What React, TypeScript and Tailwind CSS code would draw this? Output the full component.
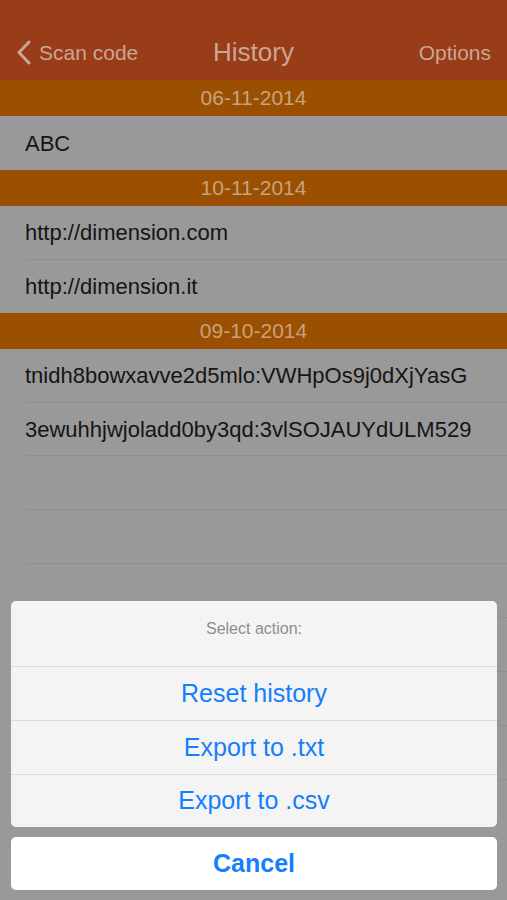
import React from "react";

const font = { fontFamily: '"Liberation Sans", Arial, sans-serif' };

function Header({ text }: { text: string }) {
  return (
    <div className="h-[36px] bg-[#9a5000] flex items-center justify-center text-[21px] text-[#c9a27e]">
      {text}
    </div>
  );
}

function Row({ text, sep = true, h = "h-[54px]" }: { text?: string; sep?: boolean; h?: string }) {
  return (
    <div className={`${h} flex flex-col pl-[25px]`}>
      <div className="flex-1 flex items-center text-[22px] text-[#151515]">{text}</div>
      {sep ? <div className="h-px bg-[#8e8e8e]" /> : null}
    </div>
  );
}

export default function App() {
  return (
    <div className="relative w-[507px] h-[900px] overflow-hidden bg-[#999999]" style={font}>
      <div className="h-[80px] bg-[#993c18] pt-[25px] flex items-center pl-[16px] pr-[16px] text-[#c9a696]">
        <div className="flex-1 flex items-center gap-[8px]">
          <svg width="15" height="25" viewBox="0 0 15 25">
            <path d="M13 2 L3 12.5 L13 23" fill="none" stroke="#c9a696" strokeWidth="3" strokeLinecap="round" strokeLinejoin="round" />
          </svg>
          <span className="text-[21px]">Scan code</span>
        </div>
        <div className="text-[26px] font-light">History</div>
        <div className="flex-1 flex justify-end text-[21px]">Options</div>
      </div>
      <Header text="06-11-2014" />
      <Row text="ABC" sep={false} />
      <Header text="10-11-2014" />
      <Row text="http://dimension.com" />
      <Row text="http://dimension.it" sep={false} h="h-[53px]" />
      <Header text="09-10-2014" />
      <Row text="tnidh8bowxavve2d5mlo:VWHpOs9j0dXjYasG" />
      <Row text="3ewuhhjwjoladd0by3qd:3vlSOJAUYdULM529" h="h-[53px]" />
      <Row />
      <Row />
      <Row />
      <Row />
      <Row />
      <Row />

      <div className="absolute left-[11px] right-[10px] top-[601px] flex flex-col gap-[10px]">
        <div className="rounded-[5px] bg-[#f4f4f4] overflow-hidden flex flex-col">
          <div className="h-[65px] flex items-start justify-center pt-[16px] text-[16px] text-[#8e8e8e]">
            Select action:
          </div>
          <div className="h-px bg-[#dcdcdc]" />
          <div className="h-[53px] flex items-center justify-center text-[25px] text-[#157efb]">Reset history</div>
          <div className="h-px bg-[#dcdcdc]" />
          <div className="h-[53px] flex items-center justify-center text-[25px] text-[#157efb]">Export to .txt</div>
          <div className="h-px bg-[#dcdcdc]" />
          <div className="h-[52px] flex items-center justify-center text-[25px] text-[#157efb]">Export to .csv</div>
        </div>
        <div className="h-[53px] rounded-[5px] bg-white flex items-center justify-center text-[25px] font-bold text-[#157efb]">
          Cancel
        </div>
      </div>
    </div>
  );
}
